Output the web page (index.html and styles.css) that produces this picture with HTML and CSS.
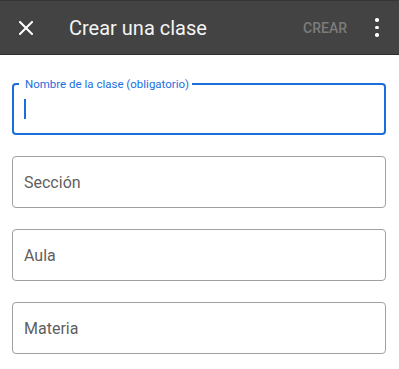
FILE: index.html
```html
<!DOCTYPE html>
<html lang="es">
<head>
<meta charset="utf-8">
<title>Crear una clase</title>
<link rel="stylesheet" href="styles.css">
</head>
<body>
<header class="appbar">
  <button class="icon-btn close" aria-label="Cerrar">
    <svg width="14" height="14" viewBox="0 0 14 14"><path d="M1 1 L13 13 M13 1 L1 13" stroke="#ffffff" stroke-width="2" stroke-linecap="square"/></svg>
  </button>
  <h1 class="title">Crear una clase</h1>
  <span class="action">CREAR</span>
  <button class="icon-btn more" aria-label="Más opciones">
    <span class="dot"></span><span class="dot"></span><span class="dot"></span>
  </button>
</header>
<main class="form">
  <div class="field focused">
    <span class="field-label">Nombre de la clase (obligatorio)</span>
    <span class="cursor"></span>
  </div>
  <div class="field"><span class="placeholder">Sección</span></div>
  <div class="field"><span class="placeholder">Aula</span></div>
  <div class="field"><span class="placeholder">Materia</span></div>
</main>
</body>
</html>
```
FILE: styles.css
```css
* { box-sizing: border-box; }
html, body { margin: 0; padding: 0; background: #ffffff; }
body { font-family: Roboto, "Liberation Sans", Arial, sans-serif; }

.appbar {
  height: 55px;
  background: #434343;
  border-top: 1px solid #363636;
  border-bottom: 1px solid #2e2e2e;
  display: flex;
  align-items: center;
  padding: 0 20px 0 19px;
}
.icon-btn {
  background: none;
  border: 0;
  padding: 0;
  margin: 0;
  display: flex;
  align-items: center;
  justify-content: center;
}
.close { width: 14px; height: 14px; }
.close svg { display: block; }
.title {
  margin: 0 0 0 36px;
  font-size: 20px;
  font-weight: 400;
  color: #f4f4f4;
  flex: 1;
  letter-spacing: 0;
}
.action {
  font-size: 14px;
  font-weight: 500;
  color: #7c7c7c;
  margin-right: 28px;
}
.more {
  flex-direction: column;
  gap: 4px;
  width: 4px;
}
.dot {
  width: 3.5px;
  height: 3.5px;
  border-radius: 50%;
  background: #ffffff;
}

.form {
  padding: 28px 13px 0 12px;
  display: flex;
  flex-direction: column;
  gap: 21px;
}
.field {
  position: relative;
  height: 52px;
  border: 1px solid #a0a0a0;
  border-radius: 4px;
  display: flex;
  align-items: center;
  padding-left: 11px;
}
.field.focused {
  border: 2px solid #1a6fdc;
  padding-left: 9px;
}
.field-label {
  position: absolute;
  top: -8px;
  left: 5px;
  background: #ffffff;
  padding: 0 3px 0 6px;
  font-size: 11.5px;
  line-height: 14px;
  color: #1a6fdc;
}
.cursor {
  width: 2px;
  height: 20px;
  background: #1a6fdc;
  margin-left: 1px;
}
.placeholder {
  font-size: 16px;
  color: #5f5f5f;
}
```
